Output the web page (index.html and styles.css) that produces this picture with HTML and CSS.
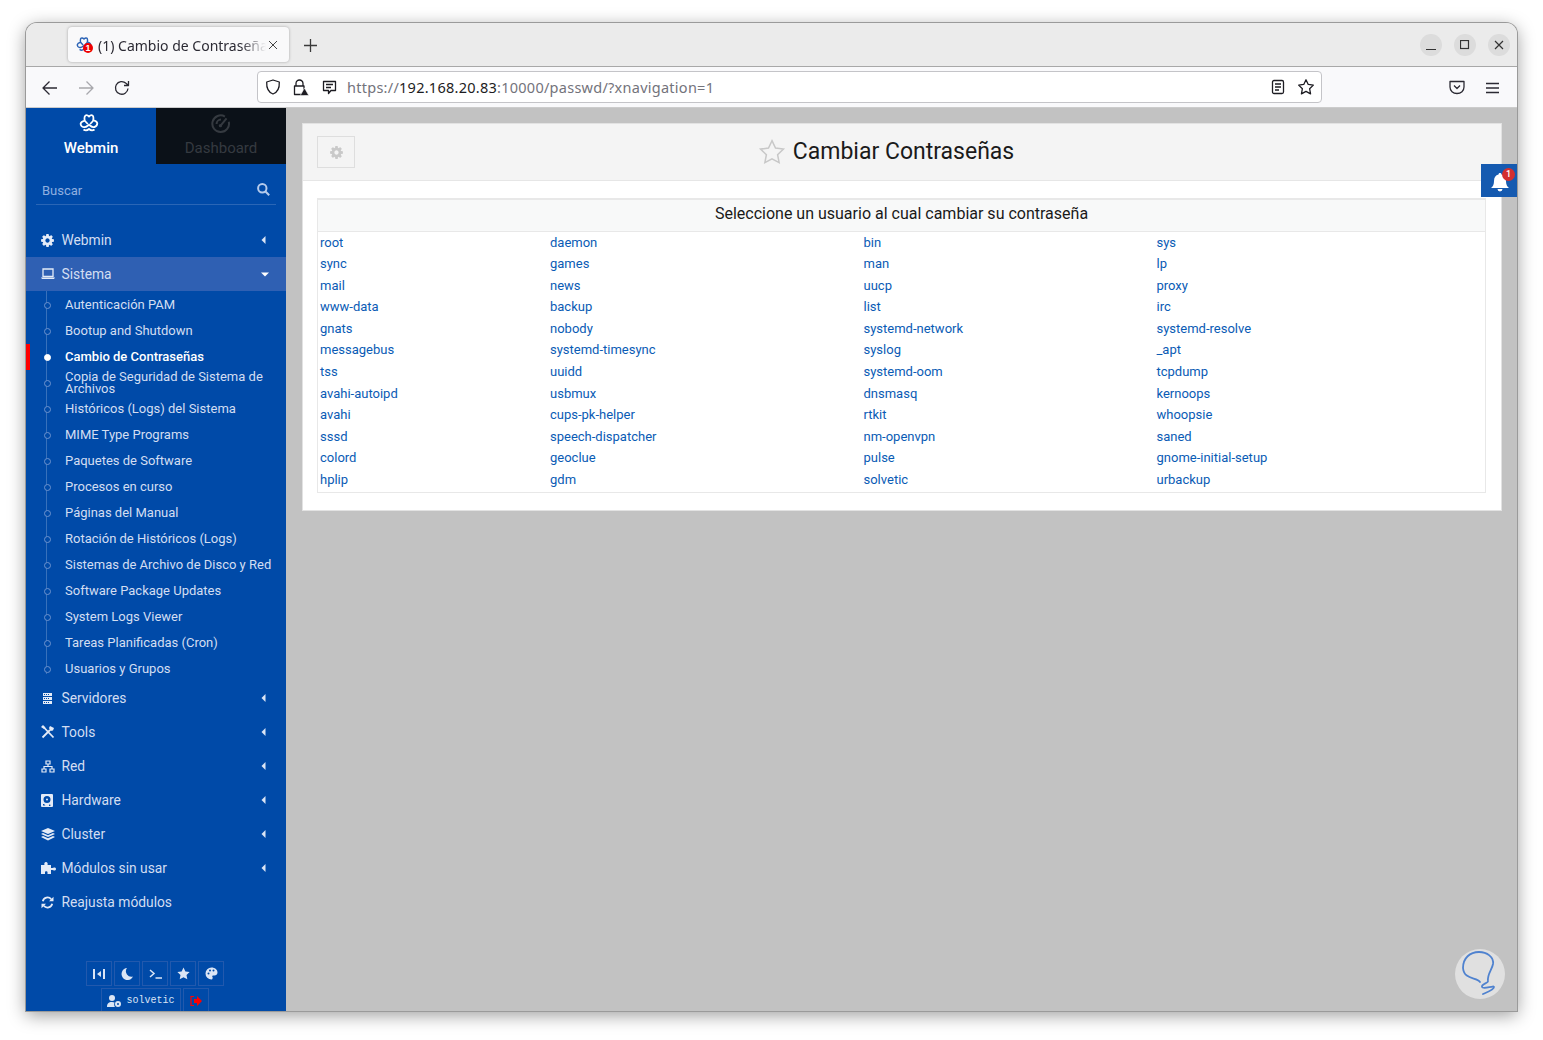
FILE: index.html
```html
<!DOCTYPE html>
<html lang="es">
<head>
<meta charset="utf-8">
<title>Cambio de Contraseñas</title>
<link rel="stylesheet" href="styles.css">
</head>
<body>
<svg class="sprite" width="0" height="0" aria-hidden="true">
<defs>
<symbol id="gear" viewBox="0 0 1792 1792"><path fill="currentColor" d="M1152 896q0-106-75-181t-181-75-181 75-75 181 75 181 181 75 181-75 75-181zm512-109v222q0 12-8 23t-20 13l-185 28q-19 54-39 91 35 50 107 138 10 12 10 25t-9 23q-27 37-99 108t-94 71q-12 0-26-9l-138-108q-44 23-91 38-16 136-29 186-7 28-36 28h-222q-14 0-24.5-8.5t-11.5-21.5l-28-184q-49-16-90-37l-141 107q-10 9-25 9-14 0-25-11-126-114-165-168-7-10-7-23 0-12 8-23 15-21 51-66.5t54-70.5q-27-50-41-99l-183-27q-13-2-21-12.5t-8-23.5v-222q0-12 8-23t19-13l186-28q14-46 39-92-40-57-107-138-10-12-10-24 0-10 9-23 26-36 98.5-107.5t94.5-71.5q13 0 26 10l138 107q44-23 91-38 16-136 29-186 7-28 36-28h222q14 0 24.5 8.5t11.5 21.5l28 184q49 16 90 37l142-107q9-9 24-9 13 0 25 10 129 119 165 170 7 8 7 22 0 12-8 23-15 21-51 66.5t-54 70.5q26 50 41 98l183 28q13 2 21 12.5t8 23.5z"/></symbol>
<symbol id="logo" viewBox="0 0 20 20"><path fill="none" stroke="currentColor" stroke-width="1.800" stroke-linejoin="round" d="M6.500 1.500c1.400-.9 2.500 0 3.500 1 1-1 2.100-1.900 3.500-1 1.300.9 1 3 .7 4.600 1.500.4 3.700 1.200 4 2.900.3 2-1.300 3.500-2.900 4.100-1.900.6-3.300-.8-5.300-2.400-2 1.600-3.400 3-5.300 2.400C3 13 1.400 11.500 1.700 9.500c.3-1.700 2.500-2.500 4-2.900-.3-1.600-.5-4.200.8-5.100z M6 7l2.800 3 M14 7l-2.800 3 M4.500 15.500c2 1.500 3.700 1.200 5.500-.5 1.800 1.700 3.500 2 5.500.5"/></symbol>
<symbol id="caret" viewBox="0 0 6 10"><path fill="currentColor" d="M4.500 1v8L.5 5z"/></symbol>
<symbol id="star" viewBox="0 0 24 24"><path d="M12 2.300l3 6.300 6.800.9-5 4.800 1.300 6.800-6.100-3.300-6.100 3.300 1.300-6.800-5-4.800 6.800-.9z"/></symbol>
</defs>
</svg>
<div class="window">
  <header class="titlebar">
    <div class="tab">
      <span class="favicon">
        <svg class="fav-logo" width="16" height="16"><use href="#logo"/></svg>
        <span class="fav-badge">1</span>
      </span>
      <span class="tab-title">(1) Cambio de Contraseñas</span>
      <svg class="tab-close" width="10" height="10" viewBox="0 0 10 10"><path d="M1 1l8 8M9 1l-8 8"/></svg>
    </div>
    <svg class="new-tab" width="13" height="13" viewBox="0 0 13 13"><path d="M6.500 0v13M0 6.500h13"/></svg>
    <div class="win-buttons">
      <span class="win-btn"><svg width="10" height="10" viewBox="0 0 10 10"><path d="M0 9.500h10"/></svg></span>
      <span class="win-btn"><svg width="10" height="10" viewBox="0 0 10 10"><rect x=".5" y=".5" width="8" height="8"/></svg></span>
      <span class="win-btn"><svg width="10" height="10" viewBox="0 0 10 10"><path d="M1 1l8 8M9 1l-8 8"/></svg></span>
    </div>
  </header>
  <nav class="toolbar">
    <svg class="tb-icon back" width="16" height="16" viewBox="0 0 16 16"><path d="M15 8H1.500M7.500 1.500L1 8l6.500 6.500"/></svg>
    <svg class="tb-icon fwd" width="16" height="16" viewBox="0 0 16 16"><path d="M1 8h13.500M8.500 1.500L15 8l-6.500 6.500"/></svg>
    <svg class="tb-icon reload" width="16" height="16" viewBox="0 0 16 16"><path d="M14 8.500A6.300 6.300 0 1 1 12 3.300L14.500 5.500M14.500 1v4.500H10"/></svg>
    <div class="urlbar">
      <svg class="ub-icon shield" width="16" height="16" viewBox="0 0 16 16"><path d="M8 1l6.300 2c.3 6-1.800 10.300-6.300 12C3.500 13.300 1.400 9 1.700 3z"/></svg>
      <svg class="ub-icon lock" width="17" height="17" viewBox="0 0 17 17"><path d="M4 7V4.500a3.500 3.500 0 0 1 7 0V7M2.500 7h9.500v8.500H2.500z"/><path class="warn" d="M12.500 9l4.300 7.500H8.200z"/></svg>
      <svg class="ub-icon msg" width="15" height="15" viewBox="0 0 15 15"><path d="M1.500 1.500h12v9H9L6.500 13.500v-3h-5zM4 4.500h7M4 7.500h5"/></svg>
      <span class="url"><span class="url-dim">https://</span><span class="url-host">192.168.20.83</span><span class="url-dim">:10000/passwd/?xnavigation=1</span></span>
      <svg class="ub-icon reader" width="14" height="16" viewBox="0 0 14 16"><rect x="1.500" y="1.500" width="11" height="13" rx="1.500"/><path d="M4 5h6M4 8h6M4 11h4"/></svg>
      <svg class="ub-icon bookmark" width="18" height="18"><use href="#star"/></svg>
    </div>
    <svg class="tb-icon pocket" width="16" height="15" viewBox="0 0 16 15"><path d="M1 1.500h14v5.500c0 3.800-3 6.500-7 6.500S1 10.800 1 7zM5 5.500l3 3 3-3"/></svg>
    <svg class="tb-icon menu" width="13" height="12" viewBox="0 0 13 12"><path d="M0 1.500h13M0 6h13M0 10.500h13"/></svg>
  </nav>
  <div class="app">
    <aside class="sidebar">
      <div class="side-tabs">
        <div class="side-tab current">
          <svg class="tab-logo" width="20" height="20"><use href="#logo"/></svg>
          <span>Webmin</span>
        </div>
        <div class="side-tab dark">
          <svg class="dash-icon" width="20" height="20" viewBox="0 0 18 18"><path d="M12.500 2.300A7.500 7.500 0 1 0 16 7M5 9a4 4 0 0 1 4-4"/><path d="M9 10l5-6"/><circle class="hub" cx="8.500" cy="10.500" r="1.500"/></svg>
          <span>Dashboard</span>
        </div>
      </div>
      <div class="search">
        <span>Buscar</span>
        <svg width="13" height="13" viewBox="0 0 13 13"><circle cx="5.300" cy="5.300" r="4.200"/><path d="M8.500 8.500l3.700 3.700"/></svg>
      </div>
      <ul class="menu-list">
        <li class="menu-item">
          <svg class="mi-icon mi-gear" width="15" height="15"><use href="#gear"/></svg>
          <span>Webmin</span>
          <svg class="mi-caret" width="6" height="10"><use href="#caret"/></svg>
        </li>
        <li class="menu-item open">
          <svg class="mi-icon" width="14" height="12" viewBox="0 0 14 12"><path class="lap" d="M2 1h10v7.500H2z"/><path fill="currentColor" d="M0 9.500h14l-1 1.500H1z"/></svg>
          <span>Sistema</span>
          <svg class="mi-caret down" width="6" height="10"><use href="#caret"/></svg>
        </li>
        <li>
          <ul class="sub-list">
            <li class="sub-item"><span>Autenticación PAM</span></li>
            <li class="sub-item"><span>Bootup and Shutdown</span></li>
            <li class="sub-item active"><span>Cambio de Contraseñas</span></li>
            <li class="sub-item"><span>Copia de Seguridad de Sistema de Archivos</span></li>
            <li class="sub-item"><span>Históricos (Logs) del Sistema</span></li>
            <li class="sub-item"><span>MIME Type Programs</span></li>
            <li class="sub-item"><span>Paquetes de Software</span></li>
            <li class="sub-item"><span>Procesos en curso</span></li>
            <li class="sub-item"><span>Páginas del Manual</span></li>
            <li class="sub-item"><span>Rotación de Históricos (Logs)</span></li>
            <li class="sub-item"><span>Sistemas de Archivo de Disco y Red</span></li>
            <li class="sub-item"><span>Software Package Updates</span></li>
            <li class="sub-item"><span>System Logs Viewer</span></li>
            <li class="sub-item"><span>Tareas Planificadas (Cron)</span></li>
            <li class="sub-item"><span>Usuarios y Grupos</span></li>
          </ul>
        </li>
        <li class="menu-item">
          <svg class="mi-icon" width="13" height="13" viewBox="0 0 13 13"><path fill="currentColor" fill-rule="evenodd" d="M2 1h9v3H2zM3 2v1h1V2zm2 0v1h1V2zm2 0v1h1V2zM2 5h9v3H2zM3 6v1h1V6zm2 0v1h1V6zm2 0v1h1V6zM2 9h9v3H2zM3 10v1h1v-1zm2 0v1h1v-1zm2 0v1h1v-1z"/></svg>
          <span>Servidores</span>
          <svg class="mi-caret" width="6" height="10"><use href="#caret"/></svg>
        </li>
        <li class="menu-item">
          <svg class="mi-icon" width="14" height="14" viewBox="0 0 14 14"><path class="tool" d="M1.500 12.500L9 5M2 1.500l10.500 11"/><path fill="currentColor" d="M8 3l1-2 4 2-1 2.500-2.500.5zM0 2l2-2 2.500 2.500-1.500 1.500z"/></svg>
          <span>Tools</span>
          <svg class="mi-caret" width="6" height="10"><use href="#caret"/></svg>
        </li>
        <li class="menu-item">
          <svg class="mi-icon" width="14" height="13" viewBox="0 0 14 13"><path class="net" d="M5 1h4v3H5zM1 9h4v3H1zM9 9h4v3H9zM7 4v2.500M3 9V6.500h8V9"/></svg>
          <span>Red</span>
          <svg class="mi-caret" width="6" height="10"><use href="#caret"/></svg>
        </li>
        <li class="menu-item">
          <svg class="mi-icon" width="12" height="13" viewBox="0 0 12 13"><path fill="currentColor" fill-rule="evenodd" d="M1 0h10a1 1 0 0 1 1 1v11a1 1 0 0 1-1 1H1a1 1 0 0 1-1-1V1a1 1 0 0 1 1-1zM6 2a3.500 3.500 0 1 0 0 7 3.500 3.500 0 0 0 0-7zM6 4.500a1 1 0 1 1 0 2 1 1 0 0 1 0-2zM2 10v1.500h2.500L3 10zM9 10.500a.8.8 0 1 0 0 1.500.8.8 0 0 0 0-1.500z"/></svg>
          <span>Hardware</span>
          <svg class="mi-caret" width="6" height="10"><use href="#caret"/></svg>
        </li>
        <li class="menu-item">
          <svg class="mi-icon" width="14" height="13" viewBox="0 0 14 13"><path fill="currentColor" d="M7 0l7 3-7 3-7-3zM2 5l5 2.200L12 5l2 1-7 3-7-3zM2 8l5 2.200L12 8l2 1-7 3.500L0 9z"/></svg>
          <span>Cluster</span>
          <svg class="mi-caret" width="6" height="10"><use href="#caret"/></svg>
        </li>
        <li class="menu-item">
          <svg class="mi-icon" width="15" height="14" viewBox="0 0 15 14"><path fill="currentColor" d="M0 4h3.500c-.6-1.500 0-3 1.500-3s2.100 1.500 1.500 3H10v3h1.500c.8-.8 3.500-.8 3.500 1s-2.700 1.800-3.500 1H10v4H6.500V11c0-1-2.500-1-2.500 0v2H0z"/></svg>
          <span>Módulos sin usar</span>
          <svg class="mi-caret" width="6" height="10"><use href="#caret"/></svg>
        </li>
        <li class="menu-item">
          <svg class="mi-icon" width="13" height="13" viewBox="0 0 13 13"><path class="sync" d="M1.800 5.200A4.800 4.800 0 0 1 10.200 3.200M11.200 7.800A4.800 4.800 0 0 1 2.800 9.800"/><path fill="currentColor" d="M12.500.8v4.500H8zM.5 12.200V7.700H5z"/></svg>
          <span>Reajusta módulos</span>
        </li>
      </ul>
      <div class="side-foot">
        <div class="foot-row">
          <span class="foot-btn"><svg width="12" height="12" viewBox="0 0 12 12"><path fill="currentColor" d="M0 1h2v10H0zM10 1h2v10h-2zM8 3v6L4 6z"/></svg></span>
          <span class="foot-btn"><svg width="12" height="12" viewBox="0 0 12 12"><path fill="currentColor" d="M6 0a6 6 0 1 0 6 8.500A5.500 5.500 0 0 1 6 0z"/></svg></span>
          <span class="foot-btn"><svg width="13" height="12" viewBox="0 0 13 12"><path class="term" d="M1 2l4 3.500L1 9M6.500 10H13"/></svg></span>
          <span class="foot-btn"><svg class="foot-star" width="15" height="15"><use href="#star"/></svg></span>
          <span class="foot-btn"><svg width="13" height="13" viewBox="0 0 13 13"><path fill="currentColor" fill-rule="evenodd" d="M6.500 0.500c3.500 0 6 2.300 6 5 0 2-1.500 3-3 3H8c-.8 0-1 .8-.6 1.300.6.700.3 2.700-.9 2.700a6 6 0 0 1 0-12zM3.500 5.500a1 1 0 1 0 0 2 1 1 0 0 0 0-2zM5 2.500a1 1 0 1 0 0 2 1 1 0 0 0 0-2zM8.500 2.500a1 1 0 1 0 0 2 1 1 0 0 0 0-2z"/></svg></span>
        </div>
        <div class="foot-row">
          <span class="foot-btn user"><svg width="14" height="12" viewBox="0 0 14 12"><circle cx="5" cy="3" r="3" fill="currentColor"/><path fill="currentColor" d="M0 12c0-3.500 1.500-5 5-5 1 0 2 .2 2.500.5C7 9 7 10.500 8 12z"/><circle cx="11" cy="9" r="2" fill="none" stroke="currentColor" stroke-width="2"/></svg><span>solvetic</span></span>
          <span class="foot-btn logout"><svg width="12" height="12" viewBox="0 0 12 12"><path class="door" d="M4 1.500H1v9h3"/><path fill="#f00" d="M4 4h3V1l5 5-5 5V8H4z"/></svg></span>
        </div>
      </div>
    </aside>
    <main class="content">
      <section class="panel">
        <div class="panel-head">
          <button class="cfg-btn" type="button"><svg width="15" height="15"><use href="#gear"/></svg></button>
          <h1 class="page-title"><svg class="title-star" width="28" height="28"><use href="#star"/></svg><span>Cambiar Contraseñas</span></h1>
        </div>
        <div class="users">
          <div class="users-head">Seleccione un usuario al cual cambiar su contraseña</div>
          <div class="users-grid">
            <a>root</a><a>daemon</a><a>bin</a><a>sys</a>
            <a>sync</a><a>games</a><a>man</a><a>lp</a>
            <a>mail</a><a>news</a><a>uucp</a><a>proxy</a>
            <a>www-data</a><a>backup</a><a>list</a><a>irc</a>
            <a>gnats</a><a>nobody</a><a>systemd-network</a><a>systemd-resolve</a>
            <a>messagebus</a><a>systemd-timesync</a><a>syslog</a><a>_apt</a>
            <a>tss</a><a>uuidd</a><a>systemd-oom</a><a>tcpdump</a>
            <a>avahi-autoipd</a><a>usbmux</a><a>dnsmasq</a><a>kernoops</a>
            <a>avahi</a><a>cups-pk-helper</a><a>rtkit</a><a>whoopsie</a>
            <a>sssd</a><a>speech-dispatcher</a><a>nm-openvpn</a><a>saned</a>
            <a>colord</a><a>geoclue</a><a>pulse</a><a>gnome-initial-setup</a>
            <a>hplip</a><a>gdm</a><a>solvetic</a><a>urbackup</a>
          </div>
        </div>
      </section>
      <div class="notify">
        <svg width="18" height="19" viewBox="0 0 18 19"><path fill="#fff" d="M9 0c1 0 1.500.7 1.500 1.500C13.500 2.200 15 4.500 15 8c0 3.500 1 5.500 3 7H0c2-1.500 3-3.500 3-7 0-3.500 1.500-5.800 4.500-6.500C7.500.7 8 0 9 0zM6.500 16h5a2.500 2.500 0 0 1-5 0z"/></svg>
        <span class="notify-badge">1</span>
      </div>
      <div class="watermark">
        <svg width="50" height="50" viewBox="0 0 50 50"><path d="M25 33C22 28 9 31 8 19 8 9 15 3 24 3c8 0 15 5 14 12-1 6-6 10-5 17 .5 2-7 3-6 6 1 3 12-2 12 0 0 3-9 6-11 7"/></svg>
      </div>
    </main>
  </div>
</div>
</body>
</html>
```
FILE: styles.css
```css
* { box-sizing: border-box; }
html, body { margin: 0; padding: 0; height: 100%; background: #fff; overflow: hidden; }
body { padding: 23px 26px 29px; font-family: Roboto, sans-serif; }
ul { list-style: none; margin: 0; padding: 0; }
.sprite { position: absolute; }

.window {
  height: 988px; display: flex; flex-direction: column; overflow: hidden;
  border-radius: 11px 11px 0 0; background: #ebebeb;
  box-shadow: 0 0 0 1px #9a9a9a, 0 4px 18px rgba(0,0,0,.4);
}

.titlebar {
  height: 44px; flex: none; display: flex; align-items: flex-start; padding: 4px 7px 0 42px;
  background: #ebebeb; border-bottom: 1px solid #a8a8a8;
}
.tab {
  width: 221px; height: 35px; display: flex; align-items: center; padding: 0 11px 0 8px;
  background: #f9f9fa; border-radius: 4px; box-shadow: 0 0 3px rgba(0,0,0,.3);
}
.favicon { position: relative; width: 17px; height: 16px; flex: none; }
.fav-logo { color: #2a62b5; position: absolute; left: 0; top: 0; }
.fav-badge {
  position: absolute; left: 7px; top: 6px; width: 10px; height: 10px; border-radius: 50%;
  background: #e00; color: #fff; font: 700 9px/10px "Liberation Sans", sans-serif; text-align: center;
}
.tab-title {
  flex: 1; margin-left: 5px; padding-top: 2px; overflow: hidden; white-space: nowrap; color: #2b2a33;
  font: 14px/20px "Noto Sans", sans-serif;
  -webkit-mask-image: linear-gradient(90deg, #000 85%, transparent 100%);
  mask-image: linear-gradient(90deg, #000 85%, transparent 100%);
}
.tab-close { flex: none; margin-left: 2px; fill: none; stroke: #444; stroke-width: 1; }
.new-tab { margin: 12px 0 0 15px; fill: none; stroke: #3a3a3a; stroke-width: 1.300; }
.win-buttons { margin-left: auto; display: flex; gap: 12px; padding-top: 7px; }
.win-btn {
  width: 22px; height: 22px; border-radius: 50%; background: #dcdcdc;
  display: flex; align-items: center; justify-content: center;
}
.win-btn svg { fill: none; stroke: #333; stroke-width: 1.200; }

.toolbar {
  height: 41px; flex: none; display: flex; align-items: center; padding-left: 16px;
  background: #f9f9fb; border-bottom: 1px solid #ccc;
}
.tb-icon { flex: none; fill: none; stroke: #2b2a33; stroke-width: 1.300; stroke-linejoin: round; margin-top: 1px; }
.fwd { margin-left: 20px; stroke: #a8a8ac; }
.reload { margin-left: 20px; }
.urlbar {
  width: 1065px; height: 32px; margin-left: 127px; display: flex; align-items: center; padding: 0 6px 0 8px;
  background: #fff; border: 1px solid #c4c4c8; border-radius: 4px;
}
.ub-icon { flex: none; fill: none; stroke: #1d1c22; stroke-width: 1.300; stroke-linejoin: round; }
.shield { margin-left: -1px; }
.lock { margin-left: 11px; }
.lock .warn { fill: #1d1c22; stroke: #fff; stroke-width: .6; }
.msg { margin-left: 13px; }
.url { flex: 1; margin-left: 10px; font: 14.500px/20px "Noto Sans", sans-serif; white-space: nowrap; letter-spacing: .26px; }
.url-dim { color: #73737b; }
.url-host { color: #1d1c22; }
.reader { margin-right: 12px; }
.bookmark { margin-right: 0; fill: none; stroke: #1d1c22; stroke-width: 1.700; }
.pocket { margin-left: 127px; }
.menu { margin-left: 21px; }

.app { flex: 1; min-height: 0; display: flex; }

.sidebar { width: 260px; flex: none; display: flex; flex-direction: column; background: #004aa8; color: #d3def2; overflow: hidden; }
.side-tabs { height: 56px; flex: none; display: flex; }
.side-tab { width: 130px; display: flex; flex-direction: column; align-items: center; padding-top: 6px; font-size: 15px; line-height: 20px; }
.side-tab span { margin-top: 4px; }
.current { color: #fff; font-weight: 500; }
.tab-logo { margin-right: 4px; }
.dark { background: #0b1118; color: #353a40; font-weight: 400; }
.dash-icon { fill: none; stroke: #353a40; stroke-width: 1.800; }
.dash-icon .hub { fill: #353a40; stroke: none; }

.search {
  height: 32px; margin: 9px 10px 0; padding: 3px 6px 0; display: flex; align-items: center; justify-content: space-between;
  border-bottom: 1px solid #2a66b6; font-size: 13px; color: #8fb0e0; flex: none;
}
.search svg { fill: none; stroke: #b5cbec; stroke-width: 2; margin-top: -1px; }

.menu-list { margin-top: 18px; }
.menu-item { height: 34px; display: flex; align-items: center; padding: 0 0 0 15px; font-size: 13.800px; position: relative; }
.menu-item > span { position: absolute; left: 35.500px; line-height: 20px; }
.mi-icon { flex: none; color: #e4ebf7; }
.mi-gear { margin-left: -1px; }
.mi-caret { position: absolute; left: 235px; color: #dbe5f5; }
.mi-caret.down { transform: rotate(-90deg); color: #fff; left: 236px; }
.open { background: #2f60b3; }
.lap { fill: none; stroke: currentColor; stroke-width: 1.300; }
.tool { fill: none; stroke: currentColor; stroke-width: 1.800; }
.net { fill: none; stroke: currentColor; stroke-width: 1.200; }
.sync { fill: none; stroke: currentColor; stroke-width: 1.800; }

.sub-list { position: relative; margin: 1px 0 -1px; }
.sub-list::before {
  content: ""; position: absolute; left: 19.500px; top: -1px; bottom: 8px; width: 1px; background: rgba(255,255,255,.22);
}
.sub-item {
  height: 26px; position: relative; display: flex; align-items: center; padding: 0 6px 0 39px;
  font-size: 13px; line-height: 12px;
}
.sub-item::before {
  content: ""; position: absolute; left: 17.500px; top: 10px; width: 5px; height: 5px; border-radius: 50%;
  background: #004aa8; border: 1px solid #6d93cf;
}
.sub-item.active { color: #fff; font-weight: 500; }
.sub-item.active::before { background: #fff; border-color: #fff; }
.sub-item.active::after { content: ""; position: absolute; left: 0; top: 0; width: 4px; height: 26px; background: #f00; }

.side-foot { margin-top: auto; margin-bottom: -2px; padding-right: 2px; flex: none; display: flex; flex-direction: column; align-items: center; gap: 2px; }
.foot-row { display: flex; gap: 2px; height: 25px; }
.foot-btn {
  min-width: 26px; height: 25px; border: 1px solid #2259ad; display: flex; align-items: center; justify-content: center;
  color: #dbe5f5; gap: 5px;
}
.term { fill: none; stroke: currentColor; stroke-width: 1.500; }
.foot-star { fill: currentColor; }
.user { width: 80px; font: 10px/12px "Liberation Mono", "DejaVu Sans Mono", monospace; }
.logout { width: 26px; }
.door { fill: none; stroke: #f00; stroke-width: 1.200; }

.content { flex: 1; min-width: 0; position: relative; background: #c2c2c2; padding: 15px 15px 0 16px; }
.panel { height: 388px; background: #fff; border: 1px solid #e2e2e2; padding-top: 0; }
.panel-head {
  height: 57px; position: relative; display: flex; align-items: center; justify-content: center;
  background: #f4f4f4; border-bottom: 1px solid #e6e6e6;
}
.cfg-btn {
  position: absolute; left: 14px; top: 12px; width: 38px; height: 32px; padding: 0;
  display: flex; align-items: center; justify-content: center;
  background: #f4f4f4; border: 1px solid #dedede; color: #c9c9c9;
}
.page-title { margin: 0; display: flex; align-items: center; gap: 7px; font-size: 23px; font-weight: 400; line-height: 30px; color: #1a1a1a; position: relative; left: -16px; }
.title-star { fill: none; stroke: #c8c8c8; stroke-width: 1.300; }

.users { margin: 17px 15px 0 14px; border: 1px solid #e8e8e8; border-top-width: 2px; }
.users-head {
  height: 31.700px; background: #f8f9f9; border-bottom: 1px solid #e8e8e8; text-align: center; font-size: 16px; line-height: 28px; color: #1a1a1a;
}
.users-grid {
  display: grid; grid-template-columns: 230px 313.500px 293px 1fr; grid-auto-rows: 21.550px; padding: 0 2px 2px;
  font-size: 13px; line-height: 21.550px;
}
.users-grid a { color: #0a5bb5; }

.notify {
  position: absolute; right: 0; top: 56px; width: 36px; height: 33px; background: #155ab0;
  display: flex; align-items: center; justify-content: center; padding: 3px 0 0 2px;
}
.notify-badge {
  position: absolute; left: 21px; top: 4px; width: 13px; height: 13px; border-radius: 50%;
  background: #d32f2f; color: #fff; font-size: 9px; line-height: 13px; font-weight: 500; text-align: center;
}
.watermark {
  position: absolute; left: 1169px; top: 841px; width: 50px; height: 50px; border-radius: 50%;
  background: #e0e0e0; display: flex; align-items: center; justify-content: center;
}
.watermark svg { fill: none; stroke: #4f82cf; stroke-width: 1.800; stroke-linecap: round; stroke-linejoin: round; }
```
